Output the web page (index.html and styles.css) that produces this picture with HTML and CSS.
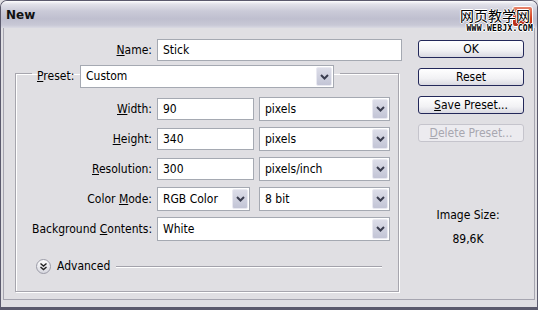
FILE: index.html
```html
<!DOCTYPE html>
<html lang="en">
<head>
  <meta charset="UTF-8" />
  <title>New</title>
  <link rel="stylesheet" href="styles.css">
</head>
<body>
  <div class="window">
    <!-- Barra de título -->
    <div class="titlebar">
      <span class="title">New</span>
      <span class="close-btn">
        <svg width="21" height="21" viewBox="0 0 21 21"><path d="M6 6l9 9M15 6l-9 9" stroke="#fff" stroke-width="2.2" fill="none"/></svg>
      </span>
      <div class="watermark">
        <span class="wm-cn">网页教学网</span>
        <span class="wm-url">WWW.WEBJX.COM</span>
      </div>
    </div>

    <div class="client">
      <!-- Coluna principal -->
      <div class="main">
        <div class="row name-row">
          <span class="lbl"><u>N</u>ame:</span>
          <div class="field name-field">Stick</div>
        </div>

        <fieldset class="group">
          <legend>
            <span class="preset-lbl"><u>P</u>reset:</span>
            <div class="select preset-select">
              <span class="val">Custom</span>
              <span class="arrow"><svg width="9" height="6" viewBox="0 0 9 6"><path d="M1 1l3.5 3.5L8 1" stroke="#3a3d4f" stroke-width="2" fill="none"/></svg></span>
            </div>
          </legend>

          <div class="row">
            <span class="lbl"><u>W</u>idth:</span>
            <div class="field num">90</div>
            <div class="select unit">
              <span class="val">pixels</span>
              <span class="arrow"><svg width="9" height="6" viewBox="0 0 9 6"><path d="M1 1l3.5 3.5L8 1" stroke="#3a3d4f" stroke-width="2" fill="none"/></svg></span>
            </div>
          </div>

          <div class="row">
            <span class="lbl"><u>H</u>eight:</span>
            <div class="field num">340</div>
            <div class="select unit">
              <span class="val">pixels</span>
              <span class="arrow"><svg width="9" height="6" viewBox="0 0 9 6"><path d="M1 1l3.5 3.5L8 1" stroke="#3a3d4f" stroke-width="2" fill="none"/></svg></span>
            </div>
          </div>

          <div class="row">
            <span class="lbl"><u>R</u>esolution:</span>
            <div class="field num">300</div>
            <div class="select unit">
              <span class="val">pixels/inch</span>
              <span class="arrow"><svg width="9" height="6" viewBox="0 0 9 6"><path d="M1 1l3.5 3.5L8 1" stroke="#3a3d4f" stroke-width="2" fill="none"/></svg></span>
            </div>
          </div>

          <div class="row">
            <span class="lbl">Color <u>M</u>ode:</span>
            <div class="select mode">
              <span class="val">RGB Color</span>
              <span class="arrow"><svg width="9" height="6" viewBox="0 0 9 6"><path d="M1 1l3.5 3.5L8 1" stroke="#3a3d4f" stroke-width="2" fill="none"/></svg></span>
            </div>
            <div class="select unit">
              <span class="val">8 bit</span>
              <span class="arrow"><svg width="9" height="6" viewBox="0 0 9 6"><path d="M1 1l3.5 3.5L8 1" stroke="#3a3d4f" stroke-width="2" fill="none"/></svg></span>
            </div>
          </div>

          <div class="row">
            <span class="lbl">Background <u>C</u>ontents:</span>
            <div class="select bg">
              <span class="val">White</span>
              <span class="arrow"><svg width="9" height="6" viewBox="0 0 9 6"><path d="M1 1l3.5 3.5L8 1" stroke="#3a3d4f" stroke-width="2" fill="none"/></svg></span>
            </div>
          </div>

          <div class="advanced">
            <span class="adv-icon">
              <svg width="15" height="15" viewBox="0 0 15 15">
                <defs>
                  <linearGradient id="advg" x1="0" y1="0" x2="0" y2="1">
                    <stop offset="0" stop-color="#ffffff"/>
                    <stop offset="1" stop-color="#d6d6de"/>
                  </linearGradient>
                </defs>
                <circle cx="7.5" cy="7.5" r="7" fill="url(#advg)" stroke="#9a9aa6"/>
                <path d="M4.5 4.5l3 2.5 3-2.5M4.5 8l3 2.5 3-2.5" stroke="#222" stroke-width="1.4" fill="none"/>
              </svg>
            </span>
            <span class="adv-text">Advanced</span>
            <span class="adv-line"></span>
          </div>
        </fieldset>
      </div>

      <!-- Botões à direita -->
      <div class="side">
        <button class="btn">OK</button>
        <button class="btn">Reset</button>
        <button class="btn"><u>S</u>ave Preset...</button>
        <button class="btn disabled"><u>D</u>elete Preset...</button>

        <div class="img-size">
          <p>Image Size:</p>
          <p>89,6K</p>
        </div>
      </div>
    </div>
  </div>
</body>
</html>
```

FILE: styles.css
```css
/* Reset básico */
* {
  margin: 0;
  padding: 0;
  box-sizing: border-box;
}

body {
  width: 538px;
  height: 310px;
  overflow: hidden;
  font-family: "DejaVu Sans Condensed", "DejaVu Sans", sans-serif;
  font-size: 12px;
  color: #000;
  background: #e0dfe3;
}

u {
  text-underline-offset: 1px;
}

/* Janela */
.window {
  width: 538px;
  height: 310px;
  display: flex;
  flex-direction: column;
  border: 1px solid #5b5a6d;
  border-bottom-width: 3px;
  border-radius: 7px 7px 0 0;
  padding: 0 2px 7px 2px;
  background: #e0dfe3;
}

.titlebar {
  position: relative;
  flex: none;
  height: 27px;
  margin: 0 -2px;
  padding-left: 5px;
  display: flex;
  align-items: center;
  border-radius: 6px 6px 0 0;
  background: linear-gradient(to bottom, #ffffff 0, #e2e2ea 3px, #cbcbd8 10px, #bfbfcf 18px, #c8c8d6 24px, #dadae3 27px);
}

.title {
  font-family: "DejaVu Sans", sans-serif;
  font-weight: bold;
  font-size: 12px;
  color: #111;
}

.close-btn {
  position: absolute;
  right: 4px;
  top: 5px;
  width: 21px;
  height: 21px;
  border-radius: 3px;
  border: 1px solid #fff;
  background: linear-gradient(to bottom, #e7846c, #cc3a1e 60%, #b52b12);
}

.close-btn svg {
  display: block;
  margin: -1px;
}

.watermark {
  position: absolute;
  right: 7px;
  top: 6px;
  display: flex;
  flex-direction: column;
  align-items: flex-end;
  z-index: 2;
}

.wm-cn {
  font-family: "Noto Sans CJK SC", sans-serif;
  font-size: 14px;
  line-height: 17px;
  color: #000;
  text-shadow: 1px 0 0 #fff, -1px 0 0 #fff, 0 1px 0 #fff, 0 -1px 0 #fff;
}

.wm-url {
  font-family: "DejaVu Sans Mono", monospace;
  font-weight: bold;
  font-size: 8px;
  line-height: 9px;
  letter-spacing: 0.3px;
  color: #000;
  margin-right: -3px;
  text-shadow: 1px 0 0 #fff, -1px 0 0 #fff, 0 1px 0 #fff, 0 -1px 0 #fff;
}

/* Área interna */
.client {
  flex: 1;
  display: flex;
  border: 1px solid #a6a5b0;
  border-top: none;
}

.main {
  width: 405px;
  flex: none;
  padding: 11px 0 0 11px;
}

.row {
  display: flex;
  align-items: center;
  height: 24px;
  margin-bottom: 6px;
}

.name-row {
  height: 22px;
  margin-bottom: 0;
}

.lbl {
  width: 120px;
  margin-right: 5px;
  text-align: right;
  white-space: nowrap;
}

.name-row .lbl {
  width: 137px;
}

.field {
  height: 22px;
  line-height: 20px;
  padding-left: 5px;
  border: 1px solid #a5a9b2;
  background: #fff;
}

.name-field {
  width: 245px;
}

.field.num {
  width: 97px;
  margin-right: 5px;
}

/* Lista suspensa */
.select {
  height: 24px;
  display: flex;
  align-items: stretch;
  border: 1px solid #a5a9b2;
  background: #fff;
}

.select .val {
  flex: 1;
  padding-left: 5px;
  line-height: 22px;
  white-space: nowrap;
}

.select .arrow {
  width: 16px;
  margin: 1px;
  display: flex;
  align-items: center;
  justify-content: center;
  border: 1px solid #e9e9f1;
  border-radius: 2px;
  background: linear-gradient(to bottom, #dcdde8, #c3c5d6);
}

.select.unit {
  width: 131px;
}

.select.mode {
  width: 93px;
  margin-right: 9px;
}

.select.bg {
  width: 233px;
}

/* Caixa de grupo */
.group {
  width: 384px;
  margin-top: 4px;
  padding: 16px 8px 16px 16px;
  border: 1px solid #a7a6ae;
  box-shadow: inset 1px 1px 0 #fff, 1px 1px 0 #fff;
}

.group legend {
  display: flex;
  align-items: flex-start;
  height: 16px;
  padding: 0 6px 0 5px;
}

.preset-lbl {
  width: 43px;
  line-height: 23px;
}

.preset-select {
  width: 254px;
  height: 23px;
}

.preset-select .val {
  line-height: 21px;
}

.advanced {
  display: flex;
  align-items: center;
  height: 18px;
  margin-top: 16px;
  padding-left: 4px;
}

.adv-icon svg {
  display: block;
}

.adv-text {
  margin-left: 6px;
}

.adv-line {
  flex: 1;
  height: 2px;
  margin: 1px 8px 0 6px;
  border-top: 1px solid #a3a2ab;
  border-bottom: 1px solid #fff;
}

/* Coluna lateral */
.side {
  flex: 1;
  padding: 12px 0 0 9px;
  display: flex;
  flex-direction: column;
  align-items: flex-start;
}

.btn {
  width: 106px;
  height: 18px;
  margin-bottom: 10px;
  font-family: inherit;
  font-size: 12px;
  line-height: 16px;
  color: #000;
  border: 1px solid #23285a;
  border-radius: 3px;
  background: linear-gradient(to bottom, #ffffff, #f1f1f4 60%, #d9d9e1);
}

.btn.disabled {
  color: #a8a7b0;
  border-color: #c5c4cc;
  background: #ecebef;
}

.img-size {
  width: 100px;
  margin-top: 56px;
  text-align: center;
  line-height: 15px;
}

.img-size p + p {
  margin-top: 9px;
}
```
